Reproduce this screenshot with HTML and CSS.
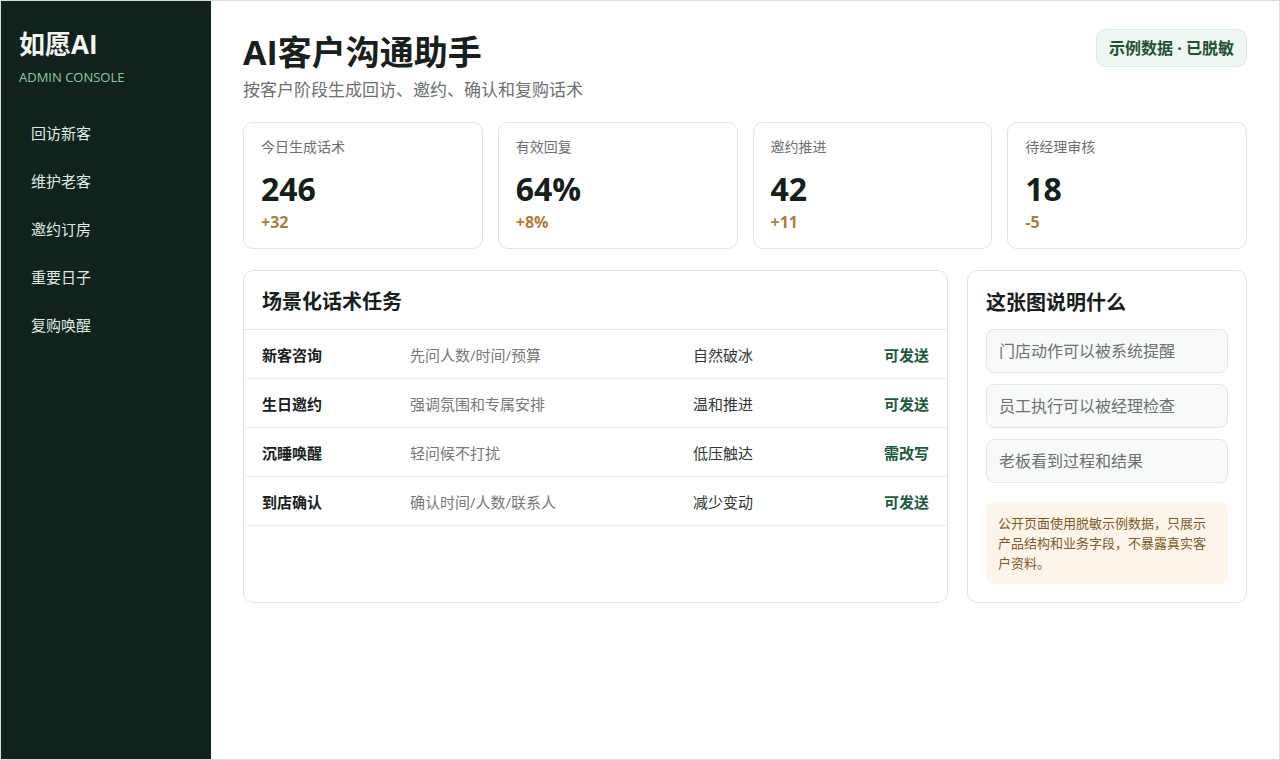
FILE: index.html
```html
<!DOCTYPE html>
<html lang="zh-CN">
  <head>
    <meta charset="UTF-8" />
    <meta name="viewport" content="width=device-width, initial-scale=1.0" />
    <title>AI客户沟通助手</title>
    <link rel="stylesheet" href="styles.css">
  </head>
  <body>
    <div class="frame">
      <aside class="sidebar">
        <div class="brand">如愿AI</div>
        <div class="brand_sub">ADMIN CONSOLE</div>
        <ul class="nav">
          <li>回访新客</li>
          <li>维护老客</li>
          <li>邀约订房</li>
          <li>重要日子</li>
          <li>复购唤醒</li>
        </ul>
      </aside>

      <main class="main">
        <div class="header">
          <div>
            <h1 class="title">AI客户沟通助手</h1>
            <p class="subtitle">按客户阶段生成回访、邀约、确认和复购话术</p>
          </div>
          <span class="badge">示例数据 · 已脱敏</span>
        </div>

        <div class="stats">
          <div class="stat">
            <div class="stat_label">今日生成话术</div>
            <div class="stat_num">246</div>
            <div class="stat_delta">+32</div>
          </div>
          <div class="stat">
            <div class="stat_label">有效回复</div>
            <div class="stat_num">64%</div>
            <div class="stat_delta">+8%</div>
          </div>
          <div class="stat">
            <div class="stat_label">邀约推进</div>
            <div class="stat_num">42</div>
            <div class="stat_delta">+11</div>
          </div>
          <div class="stat">
            <div class="stat_label">待经理审核</div>
            <div class="stat_num">18</div>
            <div class="stat_delta">-5</div>
          </div>
        </div>

        <div class="lower">
          <section class="card tasks">
            <h2 class="card_title tasks_head">场景化话术任务</h2>
            <div class="row">
              <span class="row_name">新客咨询</span>
              <span class="row_desc">先问人数/时间/预算</span>
              <span class="row_tone">自然破冰</span>
              <span class="row_status">可发送</span>
            </div>
            <div class="row">
              <span class="row_name">生日邀约</span>
              <span class="row_desc">强调氛围和专属安排</span>
              <span class="row_tone">温和推进</span>
              <span class="row_status">可发送</span>
            </div>
            <div class="row">
              <span class="row_name">沉睡唤醒</span>
              <span class="row_desc">轻问候不打扰</span>
              <span class="row_tone">低压触达</span>
              <span class="row_status">需改写</span>
            </div>
            <div class="row">
              <span class="row_name">到店确认</span>
              <span class="row_desc">确认时间/人数/联系人</span>
              <span class="row_tone">减少变动</span>
              <span class="row_status">可发送</span>
            </div>
          </section>

          <section class="card explain">
            <h2 class="card_title">这张图说明什么</h2>
            <div class="points">
              <div class="point">门店动作可以被系统提醒</div>
              <div class="point">员工执行可以被经理检查</div>
              <div class="point">老板看到过程和结果</div>
            </div>
            <p class="note">公开页面使用脱敏示例数据，只展示产品结构和业务字段，不暴露真实客户资料。</p>
          </section>
        </div>
      </main>
    </div>
  </body>
</html>
```

FILE: styles.css
```css
* {
  margin: 0;
  padding: 0;
  box-sizing: border-box;
}
body {
  font-family: "Open Sans", "Noto Sans CJK SC", sans-serif;
  color: #18211d;
  background-color: white;
}
.frame {
  display: flex;
  width: 1280px;
  height: 760px;
  border: 1px solid #dcdcdc;
  overflow: hidden;
}
.sidebar {
  width: 210px;
  flex-shrink: 0;
  background-color: #10221b;
  padding: 25px 18px 0 18px;
}
.brand {
  font-size: 26px;
  font-weight: 700;
  line-height: 36px;
  color: #f3f7f4;
}
.brand_sub {
  font-size: 13px;
  line-height: 18px;
  margin-top: 6px;
  color: #8ccaa4;
}
.nav {
  list-style: none;
  margin-top: 36px;
  padding-left: 12px;
}
.nav li {
  font-size: 15px;
  line-height: 22px;
  color: #dfeae4;
  margin-bottom: 26px;
}
.main {
  flex: 1;
  padding: 30px 32px 0 32px;
}
.header {
  display: flex;
  justify-content: space-between;
  align-items: flex-start;
}
.title {
  font-size: 34px;
  line-height: 42px;
  font-weight: 700;
  color: #17201c;
}
.subtitle {
  margin-top: 5px;
  font-size: 17px;
  line-height: 24px;
  color: #6b716e;
}
.badge {
  margin-top: -2px;
  padding: 0 12px;
  height: 38px;
  line-height: 36px;
  border: 1px solid #d8e9de;
  border-radius: 10px;
  background-color: #eef7f1;
  color: #1d5236;
  font-size: 16px;
  font-weight: 700;
}
.stats {
  display: grid;
  grid-template-columns: repeat(4, 1fr);
  gap: 15px;
  margin-top: 20px;
}
.stat {
  border: 1px solid #e2e4e3;
  border-radius: 10px;
  padding: 15px 17px 15px 17px;
  height: 127px;
}
.stat_label {
  font-size: 14px;
  line-height: 18px;
  color: #6b716e;
}
.stat_num {
  margin-top: 14px;
  font-size: 32px;
  line-height: 38px;
  font-weight: 700;
  color: #15201b;
}
.stat_delta {
  margin-top: 3px;
  font-size: 16px;
  line-height: 22px;
  font-weight: 700;
  color: #b07c3c;
}
.lower {
  display: grid;
  grid-template-columns: 1fr 280px;
  gap: 19px;
  margin-top: 21px;
}
.card {
  border: 1px solid #e2e4e3;
  border-radius: 10px;
}
.card_title {
  font-size: 20px;
  line-height: 28px;
  font-weight: 700;
  color: #17201c;
}
.tasks_head {
  padding: 17px 18px 13px 18px;
  border-bottom: 1px solid #e4e6e5;
}
.row {
  display: grid;
  grid-template-columns: 148px 1fr 160px 76px;
  align-items: center;
  height: 49px;
  padding: 0 18px;
  border-bottom: 1px solid #ebedec;
  font-size: 15px;
}
.row_name {
  font-weight: 700;
  color: #17201c;
}
.row_desc {
  color: #757a77;
}
.row_tone {
  color: #303633;
}
.row_status {
  text-align: right;
  font-weight: 700;
  color: #1d5a3c;
}
.explain {
  padding: 18px 18px 18px 18px;
}
.points {
  display: flex;
  flex-direction: column;
  gap: 11px;
  margin-top: 12px;
}
.point {
  height: 44px;
  line-height: 42px;
  padding: 0 12px;
  border: 1px solid #e4e6e5;
  border-radius: 8px;
  background-color: #f8f9f9;
  font-size: 16px;
  color: #6b716e;
}
.note {
  margin-top: 19px;
  padding: 11px 12px;
  border-radius: 8px;
  background-color: #fdf5e9;
  font-size: 13px;
  line-height: 20px;
  color: #7d5a2b;
}
```
